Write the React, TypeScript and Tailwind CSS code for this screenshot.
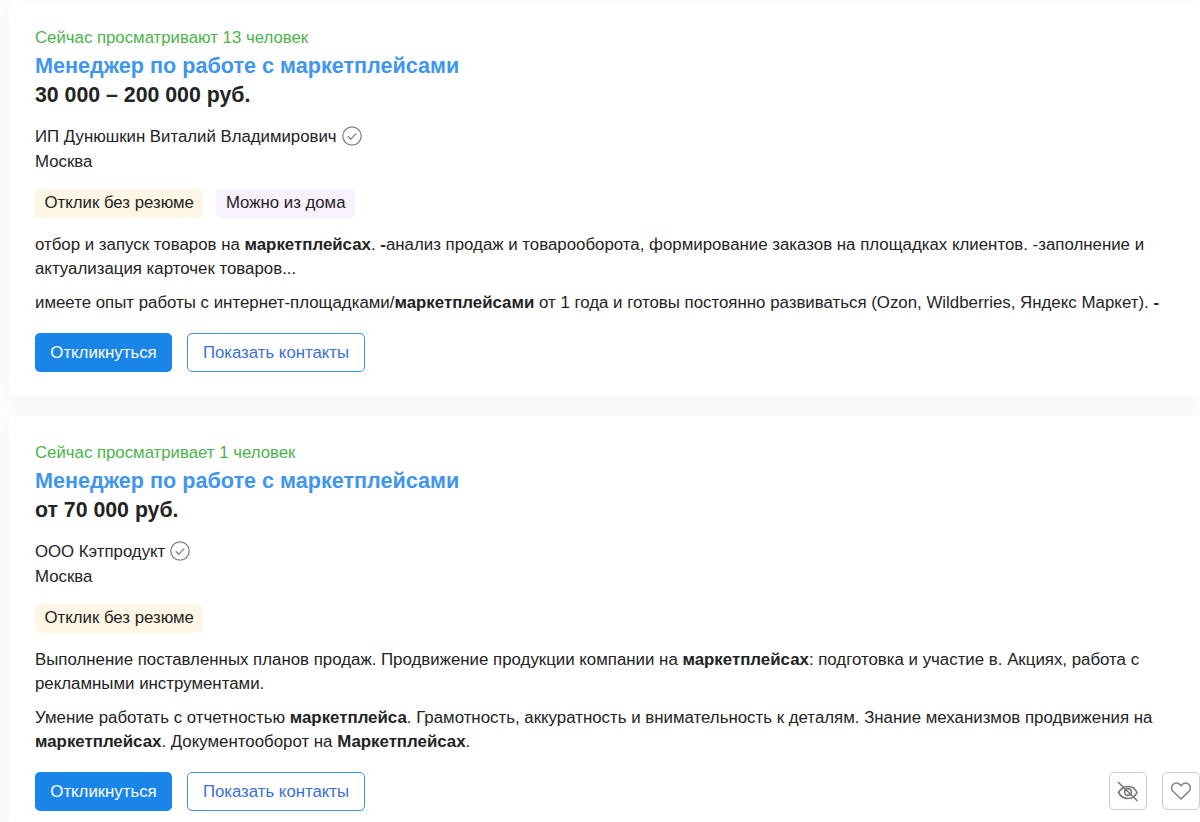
const font = { fontFamily: '"Liberation Sans", Arial, sans-serif' }

function VerifiedIcon() {
  return (
    <svg width="20" height="20" viewBox="0 0 20 20" fill="none" className="ml-[5px] mb-[2px] shrink-0">
      <circle cx="10" cy="10" r="9.200" stroke="#858585" strokeWidth="1.300" />
      <path d="M5.800 10.200l3 3 5.500-5.800" stroke="#858585" strokeWidth="1.300" />
    </svg>
  )
}

function HideIcon() {
  return (
    <svg width="22" height="22" viewBox="0 0 22 22" fill="none" stroke="#757575" strokeWidth="1.600">
      <path d="M1.500 12.500c2.200-3.800 5.400-6 9.500-6s7.300 2.200 9 6c-1.700 3.800-4.900 6-9 6s-7.300-2.200-9.500-6z" />
      <circle cx="11" cy="12" r="3.400" />
      <path d="M1 2l19.500 19" />
    </svg>
  )
}

function HeartIcon() {
  return (
    <svg width="20" height="20" viewBox="0 0 20 20" fill="none" stroke="#808080" strokeWidth="1.500">
      <path d="M10 18L2 10.300a4.800 4.800 0 0 1 0-6.800 4.800 4.800 0 0 1 6.800 0l1.200 1.200 1.200-1.200a4.800 4.800 0 0 1 6.800 0 4.800 4.800 0 0 1 0 6.800z" />
    </svg>
  )
}

interface Vacancy {
  viewers: string
  salary: string
  company: string
  tags: { label: string; className: string }[]
  duties: React.ReactNode
  reqs: React.ReactNode
  actions?: boolean
}

const remote = 'bg-[#f8f2fe]'
const noResume = 'bg-[#fff6e5]'

const vacancies: Vacancy[] = [
  {
    viewers: 'Сейчас просматривают 13 человек',
    salary: '30 000 – 200 000 руб.',
    company: 'ИП Дунюшкин Виталий Владимирович',
    tags: [
      { label: 'Отклик без резюме', className: noResume },
      { label: 'Можно из дома', className: remote },
    ],
    duties: (
      <>
        отбор и запуск товаров на <b>маркетплейсах</b>. <b>-</b>анализ продаж и товарооборота, формирование заказов на площадках клиентов. -заполнение и актуализация карточек товаров...
      </>
    ),
    reqs: (
      <>
        имеете опыт работы с интернет-площадками/<b>маркетплейсами</b> от 1 года и готовы постоянно развиваться (Ozon, Wildberries, Яндекс Маркет). <b>-</b>
      </>
    ),
  },
  {
    viewers: 'Сейчас просматривает 1 человек',
    salary: 'от 70 000 руб.',
    company: 'ООО Кэтпродукт',
    tags: [{ label: 'Отклик без резюме', className: noResume }],
    duties: (
      <>
        Выполнение поставленных планов продаж. Продвижение продукции компании на <b>маркетплейсах</b>: подготовка и участие в. Акциях, работа с рекламными инструментами.
      </>
    ),
    reqs: (
      <>
        Умение работать с отчетностью <b>маркетплейса</b>. Грамотность, аккуратность и внимательность к деталям. Знание механизмов продвижения на <b>маркетплейсах</b>. Документооборот на <b>Маркетплейсах</b>.
      </>
    ),
    actions: true,
  },
]

function VacancyCard({ v }: { v: Vacancy }) {
  return (
    <div className="bg-white rounded-l-lg ml-[9px] pl-[26px] pt-[26px] pb-[25px] shadow-[0_4px_24px_rgba(0,0,0,0.05)]">
      <div className="text-[#4bb34b] text-[16.800px] leading-[22px]">{v.viewers}</div>
      <div className="text-[#4096ee] text-[21.600px] leading-[29px] font-bold mt-[2px]">Менеджер по работе с маркетплейсами</div>
      <div className="text-[#232323] text-[21.300px] leading-[29px] font-bold mt-[1px]">{v.salary}</div>
      <div className="flex items-center mt-[15px] h-[24px] text-[16.800px] text-[#232323]">
        {v.company}
        <VerifiedIcon />
      </div>
      <div className="text-[16.800px] leading-[24px] text-[#232323] mt-[1px]">Москва</div>
      <div className="flex gap-[13px] mt-[15px]">
        {v.tags.map(t => (
          <span key={t.label} className={`${t.className} rounded-[5px] px-[9.500px] pb-[2px] h-[29px] flex items-center text-[16.800px] text-[#232323]`}>{t.label}</span>
        ))}
      </div>
      <div className="text-[16.850px] leading-[24px] text-[#232323] mt-[15px] pr-[20px]">{v.duties}</div>
      <div className="text-[16.850px] leading-[24px] text-[#232323] mt-[10px] pr-[20px]">{v.reqs}</div>
      <div className="flex items-start justify-between mt-[18px]">
        <div className="flex gap-[15px]">
          <button className="h-[39px] w-[137px] rounded-[5px] bg-[#1a85e8] text-white text-[16.800px] flex items-center justify-center">Откликнуться</button>
          <button className="h-[39px] w-[178px] rounded-[5px] border border-[#3d8fe8] bg-white text-[#3a6fd8] text-[16.800px] flex items-center justify-center">Показать контакты</button>
        </div>
        {v.actions && (
          <div className="flex gap-[15px]">
            <button className="h-[38px] w-[38px] rounded-[5px] border-[1.500px] border-[#cccccc] flex items-center justify-center">
              <HideIcon />
            </button>
            <button className="h-[38px] w-[38px] rounded-[5px] border-[1.500px] border-[#cccccc] flex items-center justify-center">
              <HeartIcon />
            </button>
          </div>
        )}
      </div>
    </div>
  )
}

export default function App() {
  return (
    <div style={font} className="w-[1200px] h-[822px] overflow-hidden bg-[#fdfdfd] flex flex-col gap-[19px] pt-[1px]">
      {vacancies.map(v => (
        <VacancyCard key={v.company} v={v} />
      ))}
    </div>
  )
}
